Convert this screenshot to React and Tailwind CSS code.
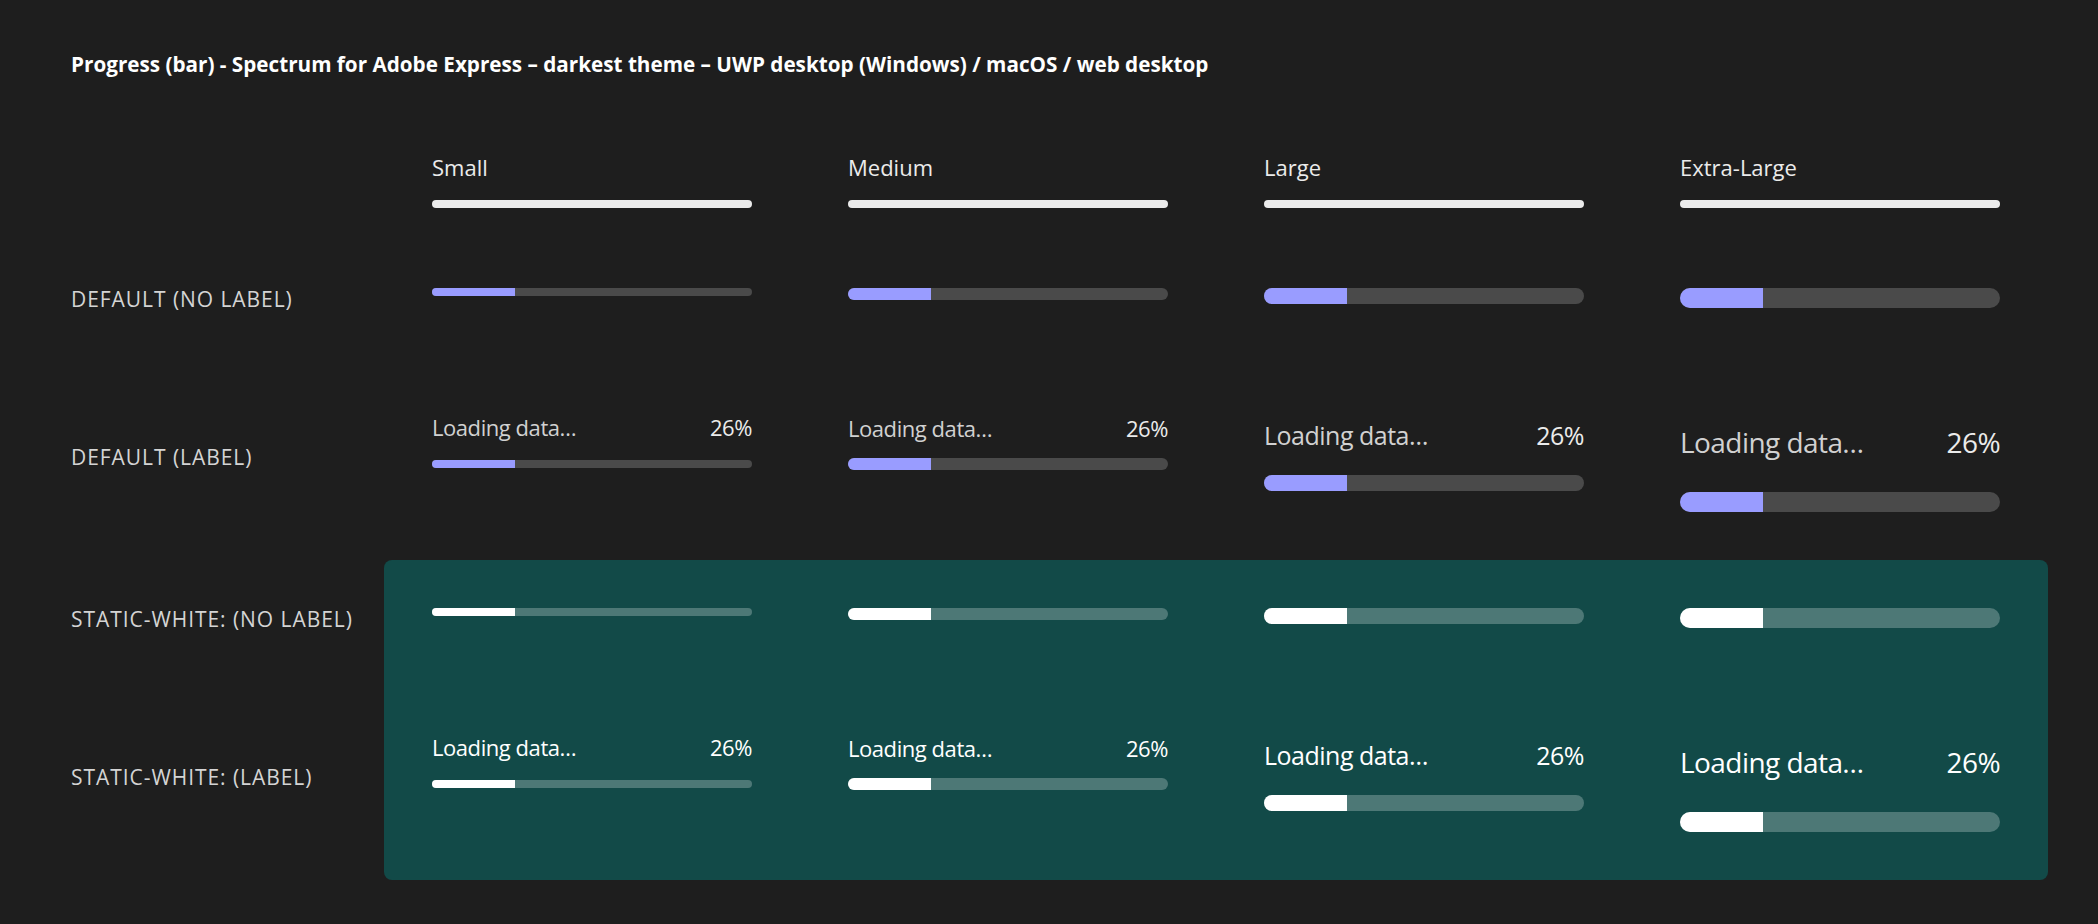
import React from "react";

const sizes = [
  {
    name: "Small",
    labelCls: "mt-[12px] text-[22px]",
    barCls: "mt-[22px] h-[8px]",
    trackCls: "h-[8px]",
  },
  {
    name: "Medium",
    labelCls: "mt-[13px] text-[22px]",
    barCls: "mt-[19px] h-[12px]",
    trackCls: "h-[12px]",
  },
  {
    name: "Large",
    labelCls: "mt-[19px] text-[25px]",
    barCls: "mt-[27px] h-[16px]",
    trackCls: "h-[16px]",
  },
  {
    name: "Extra-Large",
    labelCls: "mt-[24px] text-[28px]",
    barCls: "mt-[36px] h-[20px]",
    trackCls: "h-[20px]",
  },
];

function Bar({ size, staticWhite }) {
  return (
    <div
      className={`w-full rounded-full overflow-hidden ${size.trackCls} ${
        staticWhite ? "bg-[#4d7876]" : "bg-[#4a4a4a]"
      }`}
    >
      <div className={`h-full w-[26%] ${staticWhite ? "bg-white" : "bg-[#999cff]"}`} />
    </div>
  );
}

function LabeledBar({ size, staticWhite }) {
  return (
    <div className="flex flex-col">
      <div className={`flex justify-between leading-none tracking-[-0.02em] ${size.labelCls}`}>
        <span className={staticWhite ? "text-white" : "text-[#d1d1d1]"}>Loading data…</span>
        <span className={staticWhite ? "text-white" : "text-[#ebebeb]"}>26%</span>
      </div>
      <div
        className={`w-full rounded-full overflow-hidden ${size.barCls} ${
          staticWhite ? "bg-[#4d7876]" : "bg-[#4a4a4a]"
        }`}
      >
        <div className={`h-full w-[26%] ${staticWhite ? "bg-white" : "bg-[#999cff]"}`} />
      </div>
    </div>
  );
}

function Section({ noLabel, label, staticWhite }) {
  return (
    <div className="flex">
      <div className="w-[313px] shrink-0 py-12 flex flex-col text-[21px] leading-none text-[#d4d4d4] tracking-[0.045em] uppercase">
        <div className="h-[24px] flex items-center whitespace-nowrap">{noLabel}</div>
        <div className="h-[108px] mt-[92px] flex items-center whitespace-nowrap">{label}</div>
      </div>
      <div className={`w-[1664px] shrink-0 p-12 rounded-lg ${staticWhite ? "bg-[#124a48]" : ""}`}>
        <div className="grid grid-cols-4 gap-x-[96px] h-[24px] items-start">
          {sizes.map((s) => (
            <Bar key={s.name} size={s} staticWhite={staticWhite} />
          ))}
        </div>
        <div className="grid grid-cols-4 gap-x-[96px] h-[108px] mt-[92px] items-start">
          {sizes.map((s) => (
            <LabeledBar key={s.name} size={s} staticWhite={staticWhite} />
          ))}
        </div>
      </div>
    </div>
  );
}

export default function App() {
  return (
    <div className="min-h-screen w-full bg-[#1e1e1e] font-['Open_Sans',sans-serif] pl-[71px] pt-[54px]">
      <h1 className="text-[20.7px] leading-none font-bold text-white whitespace-nowrap">
        Progress (bar) - Spectrum for Adobe Express – darkest theme – UWP desktop (Windows) / macOS / web desktop
      </h1>

      {/* size headers */}
      <div className="flex mt-[81px]">
        <div className="w-[313px] shrink-0" />
        <div className="w-[1664px] shrink-0 px-12 grid grid-cols-4 gap-x-[96px]">
          {sizes.map((s) => (
            <div key={s.name} className="flex flex-col">
              <span className="text-[22px] leading-none text-[#ebebeb]">{s.name}</span>
              <div className="mt-[22px] h-[8px] w-full rounded-full bg-[#ebebeb]" />
            </div>
          ))}
        </div>
      </div>

      <div className="mt-[32px]">
        <Section noLabel="Default (no label)" label="Default (label)" />
        <Section noLabel="Static-white: (no label)" label="Static-white: (label)" staticWhite />
      </div>
    </div>
  );
}
